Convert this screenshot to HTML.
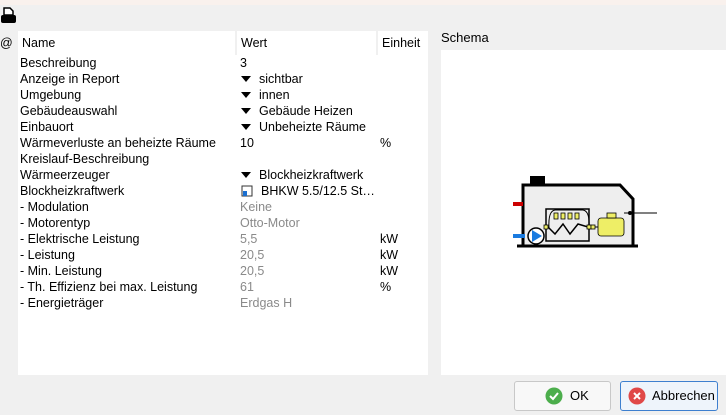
<!DOCTYPE html>
<html><head><style>
body{margin:0;width:726px;height:415px;background:#f0f0f0;font-family:"Liberation Sans",sans-serif;font-size:12.5px;color:#000;position:relative;overflow:hidden}
.top{position:absolute;left:0;top:0;width:726px;height:5px;background:#f9f1ed}
.tbl{position:absolute;left:18px;top:31px;width:410px;height:344px;background:#fff}
.hd{position:absolute;top:31px;height:24px;line-height:24px;background:#fff;border-right:2px solid #f0f0f0;box-sizing:border-box;padding-left:4px}
.r{position:absolute;height:16px;line-height:16px;white-space:nowrap}
.g{color:#8a8a8a}
.tri{display:inline-block;width:0;height:0;border-left:5px solid transparent;border-right:5px solid transparent;border-top:6px solid #000;margin:0 8px 1px 1px;vertical-align:middle}
.schema{position:absolute;left:441px;top:50px;width:285px;height:325px;background:#fff}
.btn{position:absolute;top:381px;height:30px;box-sizing:border-box;border:1px solid #c8c8c8;border-radius:3px;background:#f8f8f8;line-height:28px;font-size:13px}
</style></head><body>
<div class="top"></div>
<svg style="position:absolute;left:0;top:7px" width="18" height="18" viewBox="0 0 18 18"><path d="M4 1h6l3 3v4H4z" fill="#fff" stroke="#000" stroke-width="1.5"/><rect x="1" y="8" width="15" height="8" rx="2" fill="#000"/></svg>
<div class="tbl"></div>
<div class="hd" style="left:0;width:18px;background:#f0f0f0;padding-left:0">@</div>
<div class="hd" style="left:18px;width:219px">Name</div>
<div class="hd" style="left:237px;width:141px">Wert</div>
<div class="hd" style="left:378px;width:52px">Einheit</div>
<div style="position:absolute;left:20px;top:55px">
<div class="r" style="top:0">Beschreibung</div>
<div class="r" style="top:16px">Anzeige in Report</div>
<div class="r" style="top:32px">Umgebung</div>
<div class="r" style="top:48px">Gebäudeauswahl</div>
<div class="r" style="top:64px">Einbauort</div>
<div class="r" style="top:80px">Wärmeverluste an beheizte Räume</div>
<div class="r" style="top:96px">Kreislauf-Beschreibung</div>
<div class="r" style="top:112px">Wärmeerzeuger</div>
<div class="r" style="top:128px">Blockheizkraftwerk</div>
<div class="r" style="top:144px">- Modulation</div>
<div class="r" style="top:160px">- Motorentyp</div>
<div class="r" style="top:176px">- Elektrische Leistung</div>
<div class="r" style="top:192px">- Leistung</div>
<div class="r" style="top:208px">- Min. Leistung</div>
<div class="r" style="top:224px">- Th. Effizienz bei max. Leistung</div>
<div class="r" style="top:240px">- Energieträger</div>
</div>
<div style="position:absolute;left:240px;top:55px">
<div class="r" style="top:0">3</div>
<div class="r" style="top:16px"><span class="tri"></span>sichtbar</div>
<div class="r" style="top:32px"><span class="tri"></span>innen</div>
<div class="r" style="top:48px"><span class="tri"></span>Gebäude Heizen</div>
<div class="r" style="top:64px"><span class="tri"></span>Unbeheizte Räume</div>
<div class="r" style="top:80px">10</div>
<div class="r" style="top:112px"><span class="tri"></span>Blockheizkraftwerk</div>
<div class="r" style="top:128px"><svg width="12" height="12" style="vertical-align:-2px;margin:0 8px 0 1px"><rect x="1" y="1" width="10" height="10" fill="#fff" stroke="#333"/><rect x="2" y="6" width="4" height="5" fill="#1a6fd0"/></svg>BHKW 5.5/12.5 St…</div>
<div class="r g" style="top:144px">Keine</div>
<div class="r g" style="top:160px">Otto-Motor</div>
<div class="r g" style="top:176px">5,5</div>
<div class="r g" style="top:192px">20,5</div>
<div class="r g" style="top:208px">20,5</div>
<div class="r g" style="top:224px">61</div>
<div class="r g" style="top:240px">Erdgas H</div>
</div>
<div style="position:absolute;left:380px;top:55px">
<div class="r" style="top:80px">%</div>
<div class="r" style="top:176px">kW</div>
<div class="r" style="top:192px">kW</div>
<div class="r" style="top:208px">kW</div>
<div class="r" style="top:224px">%</div>
</div>
<div style="position:absolute;left:441px;top:30px;font-size:13px">Schema</div>
<div class="schema"></div>
<svg style="position:absolute;left:0;top:0" width="726" height="415">
<rect x="530" y="176" width="15" height="9" fill="#000"/>
<path d="M523 246V185H620L633 199V246" fill="#eee" stroke="#000" stroke-width="3"/>
<line x1="517" y1="246" x2="638" y2="246" stroke="#000" stroke-width="3"/>
<rect x="513" y="202" width="10" height="4" fill="#c00"/>
<rect x="513" y="234" width="12" height="4" fill="#1a7be0"/>
<circle cx="536" cy="236" r="8" fill="#fff" stroke="#000" stroke-width="1.5"/>
<path d="M532 230L542 236L532 242Z" fill="#1a7be0"/>
<rect x="546" y="209" width="43" height="32" fill="none" stroke="#000" stroke-width="1.5"/>
<path d="M549 228Q548 211 555 210H583Q590 211 589 228" fill="none" stroke="#000" stroke-width="1"/>
<path d="M548 227L555 234L563 224L570 234L578 224L588 227" fill="none" stroke="#000" stroke-width="1.5"/>
<g fill="#ee6" stroke="#000" stroke-width=".8"><rect x="554" y="213" width="4" height="6"/><rect x="561" y="213" width="4" height="6"/><rect x="568" y="213" width="4" height="6"/><rect x="575" y="213" width="4" height="6"/>
<rect x="544" y="225" width="4" height="4"/><rect x="587" y="225" width="4" height="4"/><rect x="591" y="225" width="4" height="4"/>
<rect x="598" y="218" width="26" height="18" rx="3"/><rect x="607" y="213" width="9" height="5"/></g>
<line x1="595" y1="227" x2="598" y2="227" stroke="#000"/>
<line x1="624" y1="213" x2="657" y2="213" stroke="#000"/>
<circle cx="630" cy="213" r="2" fill="#000"/>
</svg>
<div class="btn" style="left:514px;width:97px"><svg width="18" height="18" style="position:absolute;left:30px;top:5px"><circle cx="9" cy="9" r="8.5" fill="#4cae4c"/><path d="M5 9l3 3 5-6" fill="none" stroke="#fff" stroke-width="2"/></svg><span style="position:absolute;left:55px">OK</span></div>
<div class="btn" style="left:620px;width:98px;border-color:#3d7fcf;background:#eef4fb"><svg width="18" height="18" style="position:absolute;left:7px;top:5px"><circle cx="9" cy="9" r="8.5" fill="#e04848"/><path d="M6 6l6 6M12 6l-6 6" stroke="#fff" stroke-width="2"/></svg><span style="position:absolute;left:31px">Abbrechen</span></div>
</body></html>
